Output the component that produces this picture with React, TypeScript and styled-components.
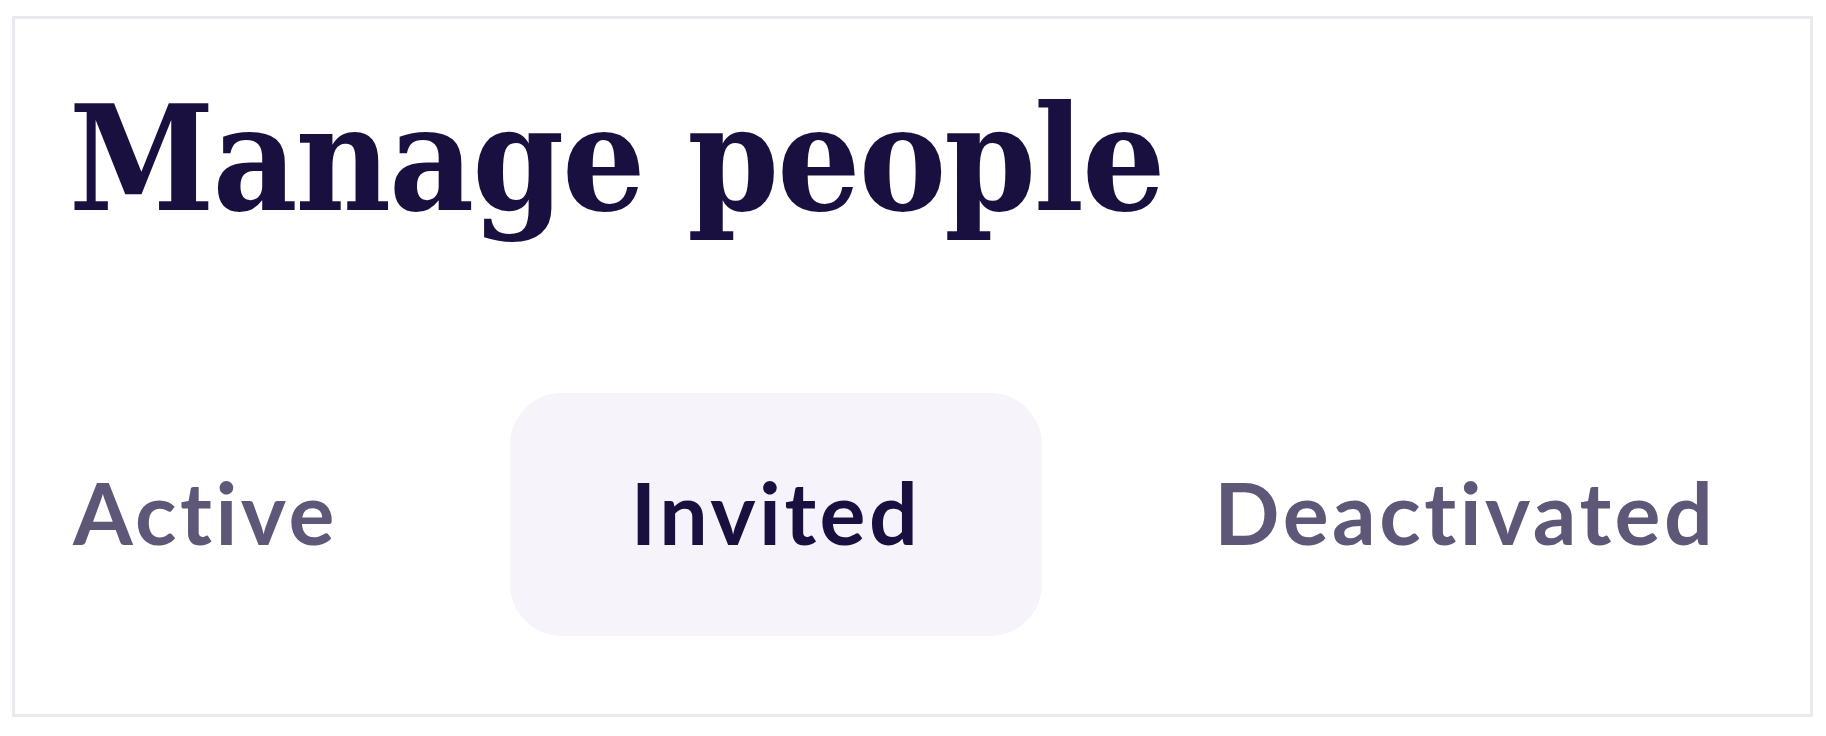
import styled, { createGlobalStyle } from "styled-components";
import { useState } from "react";

const GlobalStyle = createGlobalStyle`
    body {
        margin: 0;
        background: #fff;
    }
`

const Page = styled.div`
    padding: 16px 13px 19px 12px;
`

const Card = styled.div`
    height: 701px;
    box-sizing: border-box;
    border: 3px solid #e9eaed;
    background: #fff;
    padding: 67px 0 0 58px;
    display: flex;
    flex-direction: column;
`

const Title = styled.h1`
    margin: 0 0 0 -4px;
    font-family: "DejaVu Serif Condensed", "DejaVu Serif", serif;
    font-weight: 700;
    font-size: 146px;
    line-height: 1;
    color: #1a1040;
    letter-spacing: -2px;
`

const Tabs = styled.div`
    display: flex;
    gap: 51px;
    margin-top: 161px;
`

const Tab = styled.button<{ $active?: boolean }>`
    height: 243px;
    padding: 0 121px 6px;
    border: none;
    border-radius: 52px;
    display: flex;
    align-items: center;
    font-family: Lato, "Noto Sans", sans-serif;
    font-weight: 700;
    font-size: 86px;
    line-height: 1;
    letter-spacing: 3.5px;
    font-variant-ligatures: none;
    cursor: pointer;
    background: ${p => p.$active ? '#f6f3fb' : 'transparent'};
    color: ${p => p.$active ? '#1a1040' : '#5e5777'};

    &:first-child {
        padding-left: 0;
    }
`

const tabs = ['Active', 'Invited', 'Deactivated']

export default function App() {
    const [current, setCurrent] = useState('Invited')

    return (
        <Page>
            <GlobalStyle />
            <Card>
                <Title>Manage people</Title>
                <Tabs>
                    {tabs.map(t => (
                        <Tab key={t} $active={t === current} onClick={() => setCurrent(t)}>
                            {t}
                        </Tab>
                    ))}
                </Tabs>
            </Card>
        </Page>
    )
}
